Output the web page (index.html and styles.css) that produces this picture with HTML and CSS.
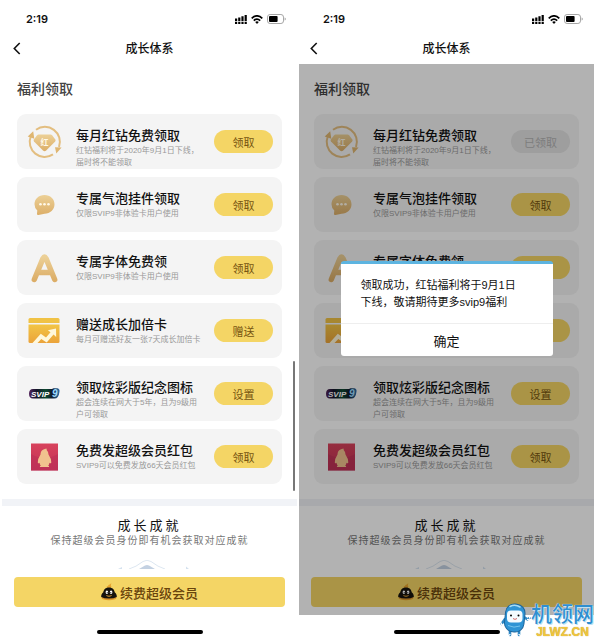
FILE: index.html
```html
<!DOCTYPE html>
<html lang="zh-CN">
<head>
  <meta charset="UTF-8">
  <meta name="viewport" content="width=device-width, initial-scale=1.0">
  <title>成长体系</title>
  <link rel="stylesheet" href="styles.css">
</head>
<body>
  <!-- Shared icons -->
  <svg class="sprite" aria-hidden="true">
    <defs>
      <linearGradient id="gold" x1="0" y1="0" x2="0" y2="1">
        <stop offset="0" stop-color="#ecd096"/>
        <stop offset="1" stop-color="#dcae68"/>
      </linearGradient>
      <linearGradient id="orange" x1="0" y1="0" x2="0" y2="1">
        <stop offset="0" stop-color="#f2c545"/>
        <stop offset="1" stop-color="#eba33a"/>
      </linearGradient>
      <linearGradient id="rainbow" x1="0" y1="0" x2="1" y2="0">
        <stop offset="0" stop-color="#54265c"/>
        <stop offset=".25" stop-color="#14142a"/>
        <stop offset=".55" stop-color="#0d4a30"/>
        <stop offset=".75" stop-color="#101a2c"/>
        <stop offset="1" stop-color="#2a6fae"/>
      </linearGradient>
      <linearGradient id="red" x1="0" y1="0" x2="0" y2="1">
        <stop offset="0" stop-color="#d8425c"/>
        <stop offset="1" stop-color="#c13256"/>
      </linearGradient>
    </defs>
    <symbol id="icon-signal" viewBox="0 0 12 9">
      <path d="M0 3.5h2.2v2.7H0zM3.200 2.500h2.200v3.700H3.200zM6.400 1.200h2.200v5H6.400zM9.600 0h2.200v6.200H9.600zM0 7h2.200v2H0zM3.200 7h2.200v2H3.200zM6.400 7h2.200v2H6.400zM9.600 7h2.200v2H9.600z"/>
    </symbol>
    <symbol id="icon-wifi" viewBox="0 0 12 9">
      <g fill="none" stroke="#000" stroke-width="1.7">
        <path d="M.7 3.3Q6-1.6 11.3 3.3"/>
        <path d="M2.8 5.6Q6 2.5 9.2 5.6"/>
      </g>
      <path d="M4.2 7Q6 5.5 7.8 7L6 8.9z"/>
    </symbol>
    <symbol id="icon-battery" viewBox="0 0 19 10">
      <rect x=".5" y=".5" width="16" height="9" rx="2.6" fill="none" stroke="#a5a5a5"/>
      <rect x="2" y="2" width="8.6" height="6" rx="1"/>
      <path d="M17.6 3.5q1.2.4 1.2 1.5t-1.2 1.5z" fill="#a5a5a5"/>
    </symbol>
    <symbol id="icon-back" viewBox="0 0 8 13">
      <path d="M6.7 1L1.3 6.5 6.7 12" fill="none" stroke="#111" stroke-width="1.6"/>
    </symbol>
    <symbol id="icon-diamond" viewBox="0 0 36 36">
      <g fill="none" stroke="#e3be80" stroke-width="2">
        <path d="M9 5.8A15 15 0 0 1 32 23"/>
        <path d="M26 30.400A15 15 0 0 1 3.700 12.500"/>
      </g>
      <path d="M.7 12.500L6.200 7.200 7.300 14.800zM28 23.200L34.600 23.400 29.300 29.600z" fill="#dfb671"/>
      <path d="M11.500 10.500h12q1 0 1.800.9l3 4.1q.7 1-.1 2l-9 9q-1.600 1.300-3.200 0l-9-9q-.8-1-.1-2l3-4.100q.8-.9 1.600-.9z" fill="url(#gold)"/>
    </symbol>
    <symbol id="icon-bubble" viewBox="0 0 36 36">
      <path d="M17.500 8C23.300 8 27.500 12 27.500 17.300S23.300 26.700 17.500 26.700L11.500 28Q9.700 28.200 10 26.500L10.300 23.600Q7.500 21 7.500 17.300C7.500 12 11.700 8 17.500 8z" fill="url(#gold)"/>
      <circle cx="13.500" cy="17.300" r="1.300" fill="#fff8e8"/>
      <circle cx="17.500" cy="17.300" r="1.300" fill="#fff8e8"/>
      <circle cx="21.500" cy="17.300" r="1.300" fill="#fff8e8"/>
    </symbol>
    <symbol id="icon-font" viewBox="0 0 36 36">
      <path d="M7.300 29.500L16 8.400Q17.500 5.600 19 8.400L27.700 29.500M11.500 22.500h12" fill="none" stroke="url(#gold)" stroke-width="5.400" stroke-linecap="round" stroke-linejoin="round"/>
    </symbol>
    <symbol id="icon-chart" viewBox="0 0 36 36">
      <path d="M3 5h28q1.500 0 1.500 1.500V10h-31V6.500Q1.500 5 3 5z" fill="#f0c245"/>
      <path d="M1.500 11.500h31v17q0 1.500-1.500 1.500H3q-1.500 0-1.500-1.500z" fill="url(#orange)"/>
      <path d="M5.500 30L13.800 20.700 19 24.500 23.500 19.300 20.900 17.200 29 15.600 29.200 24 26.500 21.600 19.700 29.400 14.300 25.900 10.500 30z" fill="#fff8dc"/>
    </symbol>
    <symbol id="icon-packet" viewBox="0 0 36 36">
      <path d="M4 4.500h27v27H4z" fill="url(#red)"/>
      <path d="M4 15q13.500 8 27 0v16.500H4z" fill="#bd3156" opacity=".6"/>
      <path d="M16.500 10.500Q17.500 9.800 19.500 9.500L19.800 11.300Q21.400 12.500 21.500 15.500 24.300 19.500 24.300 23.500 24 25 22.500 23.800 22.200 25.700 21.200 26.500 22.700 27.200 22 28H13Q12.300 27.200 13.800 26.500 12.800 25.700 12.500 23.800 11 25 10.800 23.500 10.800 19.500 13.500 15.500 13.600 11.500 16.500 10.500z" fill="#f1c28e"/>
    </symbol>
    <symbol id="icon-penguin" viewBox="0 0 16 18">
      <path d="M5.500 4.700Q5.200 3 7 3 7.300 1.200 9 1.500 9.200.4 10.500.5 9.800 1.500 9.900 2.700q1 .5.100 2z" fill="#e6a32e"/>
      <path d="M1 13.500Q0 15.500 2 16.300 8 18.200 14 16.300 16 15.500 15 13.500z" fill="#df982d"/>
      <path d="M8 4.500C11.700 4.500 13.300 6.700 13.700 9.200 15.300 10.500 16 12.400 15.800 13.900Q13 15.500 8 15.500T.2 13.900C0 12.400.7 10.500 2.300 9.200 2.700 6.700 4.300 4.500 8 4.500z" fill="#16130e"/>
      <path d="M5.900 7.600q1.300 0 1.300 1.700T5.900 11 4.600 9.300 5.900 7.600zM10.100 7.600q1.300 0 1.300 1.700T10.100 11 8.800 9.300 10.100 7.600z" fill="#fff"/>
      <path d="M4.800 12q3.200 1.300 6.400 0-.8 1.800-3.200 1.800T4.800 12z" fill="#eba938"/>
      <circle cx="6.200" cy="9.500" r=".5"/><circle cx="9.800" cy="9.500" r=".5"/>
    </symbol>
    <symbol id="icon-peaks" viewBox="0 0 80 9">
      <path d="M19 9Q26 7 33 1.500q4-2.500 8 0Q48 7 55 9" fill="none" stroke="#dde7f1"/>
      <path d="M29 9L35 5.500q2-1.200 4 0L45 9z" fill="#c3d1e2"/>
      <path d="M8 9l4-2v2zM84 9l-4-2v2zM79 9L76 6.500V9z" fill="#d5e2ef"/>
    </symbol>
  </svg>

  <main class="screens">
    <section class="phone">
      <header>
        <div class="status-bar">
          <span class="time">2:19</span>
          <div class="status-icons">
            <svg class="signal"><use href="#icon-signal"/></svg>
            <svg class="wifi"><use href="#icon-wifi"/></svg>
            <svg class="battery"><use href="#icon-battery"/></svg>
          </div>
        </div>
        <div class="nav-bar">
          <button class="back" aria-label="返回"><svg><use href="#icon-back"/></svg></button>
          <h1>成长体系</h1>
        </div>
      </header>
      <div class="content">
        <h2 class="section-title">福利领取</h2>
        <ul class="benefits">
          <li class="card">
            <svg class="card-icon" viewBox="0 0 36 36">
              <use href="#icon-diamond"/>
              <text x="17.500" y="20.500" class="diamond-text">红</text>
            </svg>
            <div class="card-text"><h3>每月红钻免费领取</h3><p>红钻福利将于2020年9月1日下线，<br>届时将不能领取</p></div>
            <button class="pill">领取</button>
          </li>
          <li class="card">
            <svg class="card-icon"><use href="#icon-bubble"/></svg>
            <div class="card-text"><h3>专属气泡挂件领取</h3><p>仅限SVIP9非体验卡用户使用</p></div>
            <button class="pill">领取</button>
          </li>
          <li class="card">
            <svg class="card-icon"><use href="#icon-font"/></svg>
            <div class="card-text"><h3>专属字体免费领</h3><p>仅限SVIP9非体验卡用户使用</p></div>
            <button class="pill">领取</button>
          </li>
          <li class="card">
            <svg class="card-icon"><use href="#icon-chart"/></svg>
            <div class="card-text"><h3>赠送成长加倍卡</h3><p>每月可赠送好友一张7天成长加倍卡</p></div>
            <button class="pill">赠送</button>
          </li>
          <li class="card">
            <svg class="card-icon" viewBox="0 0 36 36">
              <path d="M6 13h19l1.500-.8h4q2.500.5 2 3.500-.8 6.800-5 6.800H6q-4 0-4-4.750T6 13z" fill="url(#rainbow)"/>
              <text x="4" y="20.600" class="svip-text">SVIP</text>
              <text x="25" y="21" class="svip-nine">9</text>
            </svg>
            <div class="card-text"><h3>领取炫彩版纪念图标</h3><p>超会连续在网大于5年，且为9级用<br>户可领取</p></div>
            <button class="pill">设置</button>
          </li>
          <li class="card">
            <svg class="card-icon"><use href="#icon-packet"/></svg>
            <div class="card-text"><h3>免费发超级会员红包</h3><p>SVIP9可以免费发放66天会员红包</p></div>
            <button class="pill">领取</button>
          </li>
        </ul>
        <div class="achievement">
          <h2>成长成就</h2>
          <p>保持超级会员身份即有机会获取对应成就</p>
          <svg class="peaks"><use href="#icon-peaks"/></svg>
        </div>
        <button class="renew"><svg><use href="#icon-penguin"/></svg>续费超级会员</button>
        <div class="scroll-thumb"></div>
      </div>
      <div class="home-bar"></div>
    </section>

    <section class="phone">
      <header>
        <div class="status-bar">
          <span class="time">2:19</span>
          <div class="status-icons">
            <svg class="signal"><use href="#icon-signal"/></svg>
            <svg class="wifi"><use href="#icon-wifi"/></svg>
            <svg class="battery"><use href="#icon-battery"/></svg>
          </div>
        </div>
        <div class="nav-bar">
          <button class="back" aria-label="返回"><svg><use href="#icon-back"/></svg></button>
          <h1>成长体系</h1>
        </div>
      </header>
      <div class="content">
        <h2 class="section-title">福利领取</h2>
        <ul class="benefits">
          <li class="card">
            <svg class="card-icon" viewBox="0 0 36 36">
              <use href="#icon-diamond"/>
              <text x="17.500" y="20.500" class="diamond-text">红</text>
            </svg>
            <div class="card-text"><h3>每月红钻免费领取</h3><p>红钻福利将于2020年9月1日下线，<br>届时将不能领取</p></div>
            <button class="pill" disabled>已领取</button>
          </li>
          <li class="card">
            <svg class="card-icon"><use href="#icon-bubble"/></svg>
            <div class="card-text"><h3>专属气泡挂件领取</h3><p>仅限SVIP9非体验卡用户使用</p></div>
            <button class="pill">领取</button>
          </li>
          <li class="card">
            <svg class="card-icon"><use href="#icon-font"/></svg>
            <div class="card-text"><h3>专属字体免费领</h3></div>
            <button class="pill" aria-label="领取"></button>
          </li>
          <li class="card">
            <svg class="card-icon"><use href="#icon-chart"/></svg>
            <div class="card-text"></div>
            <button class="pill" aria-label="赠送"></button>
          </li>
          <li class="card">
            <svg class="card-icon" viewBox="0 0 36 36">
              <path d="M6 13h19l1.500-.8h4q2.500.5 2 3.500-.8 6.800-5 6.800H6q-4 0-4-4.750T6 13z" fill="url(#rainbow)"/>
              <text x="4" y="20.600" class="svip-text">SVIP</text>
              <text x="25" y="21" class="svip-nine">9</text>
            </svg>
            <div class="card-text"><h3>领取炫彩版纪念图标</h3><p>超会连续在网大于5年，且为9级用<br>户可领取</p></div>
            <button class="pill">设置</button>
          </li>
          <li class="card">
            <svg class="card-icon"><use href="#icon-packet"/></svg>
            <div class="card-text"><h3>免费发超级会员红包</h3><p>SVIP9可以免费发放66天会员红包</p></div>
            <button class="pill">领取</button>
          </li>
        </ul>
        <div class="achievement">
          <h2>成长成就</h2>
          <p>保持超级会员身份即有机会获取对应成就</p>
          <svg class="peaks"><use href="#icon-peaks"/></svg>
        </div>
        <button class="renew"><svg><use href="#icon-penguin"/></svg>续费超级会员</button>
        <div class="overlay">
          <div class="dialog" role="dialog" aria-modal="true">
            <p>领取成功，红钻福利将于9月1日<br>下线，敬请期待更多svip9福利</p>
            <button>确定</button>
          </div>
        </div>
      </div>
      <div class="home-bar"></div>

      <!-- Site watermark -->
      <div class="watermark">
        <svg viewBox="0 0 32 36">
          <g fill="none" stroke="#2b86c4" stroke-width="2.600" stroke-linecap="round">
            <path d="M6 17L2.500 22M25 15l3.500 2.500 2-1.500M11 29v4M20 29v4"/>
          </g>
          <path d="M2.500 22L1.500 20M2.500 22l-1 1.500M2.500 22l1.500 1.500M30.500 16l.500-2M28.500 17.500l2 .5M11 32.500l-1.500 1M20 32.500l1.500 1" fill="none" stroke="#fff" stroke-width="1.300" stroke-linecap="round"/>
          <rect x="6" y="2" width="19.500" height="28" rx="9" transform="rotate(6 16 16)" fill="#2e94d5" stroke="#1c659c"/>
          <path d="M11 4.500q5-2.500 10 .5" fill="none" stroke="#a5dbf5" stroke-width="1.500" stroke-linecap="round"/>
          <rect x="8" y="8.500" width="15.500" height="12" rx="4" fill="#f4fbff"/>
          <circle cx="12" cy="13.500" r="1"/><circle cx="19.500" cy="13.500" r="1"/>
          <path d="M14 16.500q2 1.800 4 0" fill="none" stroke="#c44" stroke-width=".8"/>
          <path d="M9 23.500q6 3 12 .5" fill="none" stroke="#74c4ee"/>
        </svg>
        <div class="watermark-text">
          <span class="watermark-name">机领网</span>
          <span class="watermark-url">JLWZ.CN</span>
        </div>
      </div>
    </section>
  </main>
</body>
</html>
```
FILE: styles.css
```css
/* General reset */
* {
  margin: 0;
  padding: 0;
  box-sizing: border-box;
}

body {
  background-color: #fff;
  font-family: "Liberation Sans", "Noto Sans CJK SC", sans-serif;
  color: #111;
}

button {
  border: none;
  background: none;
  font-family: inherit;
  cursor: pointer;
}

ul {
  list-style: none;
}

.sprite {
  position: absolute;
  width: 0;
  height: 0;
}

/* Two screens side by side */
.screens {
  display: flex;
  gap: 2px;
  padding: 0 1px 0 2px;
}

.phone {
  position: relative;
  flex: 1;
  min-width: 0;
}

/* Status bar */
.status-bar {
  display: flex;
  justify-content: space-between;
  align-items: center;
  height: 33px;
  padding: 5px 11px 0 24px;
}

.time {
  font-family: Inter, sans-serif;
  font-size: 11px;
  font-weight: 600;
}

.status-icons {
  display: flex;
  align-items: center;
  gap: 4px;
}

.signal,
.wifi {
  width: 12px;
  height: 9px;
}

.battery {
  width: 19px;
  height: 10px;
}

/* Navigation bar */
.nav-bar {
  display: grid;
  grid-template-columns: 30px 1fr 30px;
  align-items: center;
  height: 31px;
}

.nav-bar h1 {
  font-size: 12px;
  font-weight: 500;
  line-height: 18px;
  text-align: center;
}

.back {
  display: flex;
  padding-left: 11px;
}

.back svg {
  width: 8px;
  height: 13px;
}

/* Content */
.content {
  position: relative;
  padding: 15px 0 8px;
}

.section-title {
  padding: 0 15px;
  font-size: 14px;
  font-weight: 500;
  line-height: 20px;
  color: #444;
}

.benefits {
  display: grid;
  gap: 8px;
  padding: 15px;
}

.card {
  display: flex;
  align-items: center;
  height: 55px;
  padding: 0 9px 0 10px;
  border-radius: 9px;
  background-color: #f4f4f4;
}

.card-icon {
  flex: none;
  width: 36px;
  height: 36px;
  margin-right: 13px;
}

.card-text {
  flex: 1;
  align-self: flex-start;
  min-width: 0;
  padding-top: 13px;
  white-space: nowrap;
}

.card-text h3 {
  font-size: 13px;
  font-weight: 500;
  line-height: 18px;
}

.card-text p {
  font-size: 8px;
  line-height: 12px;
  color: #999;
}

.pill {
  flex: none;
  width: 59px;
  height: 23px;
  border-radius: 12px;
  background-color: #f4d565;
  font-size: 11px;
  color: #765410;
}

.pill:disabled {
  background-color: #e2e2e2;
  color: #b3b3b3;
  cursor: default;
}

.diamond-text {
  font-size: 8px;
  font-weight: 700;
  text-anchor: middle;
  fill: #fff8e8;
}

.svip-text {
  font-size: 8px;
  font-weight: 700;
  font-style: italic;
  fill: #fff;
}

.svip-nine {
  font-size: 10px;
  font-weight: 700;
  font-style: italic;
  fill: #9bdcff;
}

/* Achievement section */
.achievement {
  display: flex;
  flex-direction: column;
  align-items: center;
  padding-top: 11px;
  border-top: 7px solid #f1f3f7;
}

.achievement h2 {
  font-size: 13px;
  font-weight: 400;
  line-height: 18px;
  letter-spacing: 3px;
}

.achievement p {
  font-size: 10px;
  line-height: 12px;
  letter-spacing: 1px;
  color: #777;
}

.peaks {
  width: 80px;
  height: 9px;
  margin-top: 13px;
}

.renew {
  display: flex;
  justify-content: center;
  align-items: center;
  gap: 3px;
  width: calc(100% - 24px);
  height: 30px;
  margin: 8px 12px 0;
  border-radius: 4px;
  background-color: #f4d565;
  font-size: 13px;
  font-weight: 500;
  color: #69440c;
}

.renew svg {
  width: 16px;
  height: 18px;
}

.scroll-thumb {
  position: absolute;
  top: 297px;
  right: 2px;
  width: 2px;
  height: 130px;
  border-radius: 1px;
  background-color: #777;
}

.home-bar {
  width: 106px;
  height: 4px;
  margin: 15px auto 6px;
  border-radius: 2px;
  background-color: #000;
}

/* Dialog */
.overlay {
  position: absolute;
  inset: 0;
  display: flex;
  justify-content: center;
  align-items: flex-start;
  padding-top: 197px;
  background-color: rgba(0, 0, 0, 0.3);
}

.dialog {
  width: 212px;
  border-top: 3px solid #5db4e0;
  border-radius: 3px;
  background-color: #fff;
}

.dialog p {
  padding: 13px 20px 12px;
  font-size: 11px;
  line-height: 17px;
  white-space: nowrap;
}

.dialog button {
  display: block;
  width: 100%;
  height: 33px;
  border-top: 1px solid #eee;
  font-size: 13px;
  color: #111;
}

/* Watermark */
.watermark {
  position: absolute;
  right: 0;
  bottom: 2px;
  display: flex;
  align-items: center;
}

.watermark svg {
  width: 32px;
  height: 36px;
}

.watermark-text {
  display: flex;
  flex-direction: column;
  align-items: center;
}

.watermark-name {
  font-size: 21px;
  font-weight: 500;
  line-height: 24px;
  color: #2f8fd0;
  text-shadow: 0 0 1px #fff, 1px 1px 0 #b9def2;
}

.watermark-url {
  font-size: 12px;
  font-weight: 700;
  line-height: 12px;
  color: #f0c63c;
  text-shadow: 0 0 1px #b98d20;
}
```
